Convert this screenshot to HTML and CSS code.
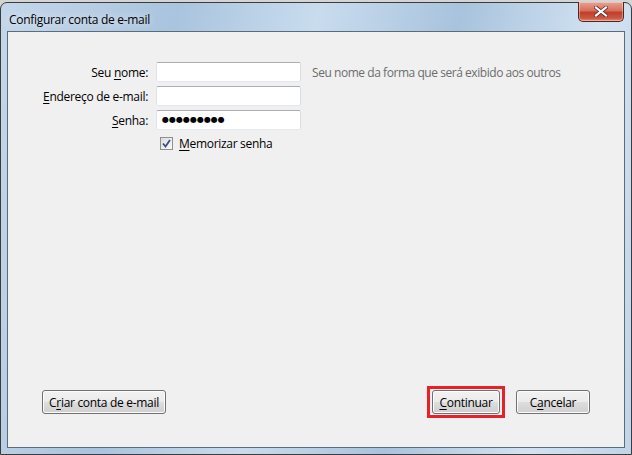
FILE: index.html
```html
<!DOCTYPE html>
<html lang="pt">
<head>
<meta charset="utf-8">
<link rel="stylesheet" href="styles.css">
</head>
<body>
<div class="window">
  <div class="titlebar">
    <span class="title">Configurar conta de e-mail</span>
    <button class="close" aria-label="Fechar">
      <svg width="14" height="11" viewBox="0 0 14 11"><path d="M2 1.5 L12 9.5 M12 1.5 L2 9.5" stroke="#5a2a22" stroke-width="3.6" stroke-linecap="square"/><path d="M2 1.5 L12 9.5 M12 1.5 L2 9.5" stroke="#fff" stroke-width="2.2" stroke-linecap="square"/></svg>
    </button>
  </div>
  <div class="client">
    <div class="form">
      <label class="lbl">Seu <u>n</u>ome:</label>
      <div class="field"><span class="input"></span><span class="hint">Seu nome da forma que será exibido aos outros</span></div>
      <label class="lbl"><u>E</u>ndereço de e-mail:</label>
      <div class="field"><span class="input"></span></div>
      <label class="lbl"><u>S</u>enha:</label>
      <div class="field"><span class="input pw">●●●●●●●●●</span></div>
      <span></span>
      <div class="check-row">
        <span class="checkbox">
          <svg width="9" height="9" viewBox="0 0 9 9"><path d="M1 4.5 L3.5 7.5 L8 1" fill="none" stroke="#3b4f86" stroke-width="1.8"/></svg>
        </span>
        <span class="check-label"><u>M</u>emorizar senha</span>
      </div>
    </div>
    <div class="buttons">
      <button class="btn btn-create">C<u>r</u>iar conta de e-mail</button>
      <span class="spacer"></span>
      <span class="focus-ring"><button class="btn btn-continue"><u>C</u>ontinuar</button></span>
      <button class="btn btn-cancel">C<u>a</u>ncelar</button>
    </div>
  </div>
</div>
</body>
</html>
```
FILE: styles.css
```css
* { box-sizing: border-box; }
html, body { margin: 0; padding: 0; }
body {
  width: 632px;
  height: 455px;
  background: #d4d4d4;
  font-family: "Open Sans", "Noto Sans", sans-serif;
  font-size: 12px;
  color: #000;
  overflow: hidden;
}
.window {
  margin-top: 2px;
  width: 632px;
  height: 453px;
  border: 1px solid #3c3c3c;
  border-radius: 7px 7px 0 0;
  background: linear-gradient(100deg, #c4d7ea 0%, #a9c4de 25%, #c9dcee 45%, #a8c3dd 65%, #d2e2f1 85%, #c0d5ea 100%);
  padding: 0 6px 6px 6px;
  display: flex;
  flex-direction: column;
}
.titlebar {
  height: 28px;
  display: flex;
  align-items: flex-start;
  position: relative;
}
.title {
  margin-top: 8px;
  margin-left: 2px;
  font-size: 12px;
  letter-spacing: -0.3px;
  color: #000;
  text-shadow: 0 0 8px rgba(255,255,255,0.9);
}
.close {
  margin-left: auto;
  margin-right: 1px;
  margin-top: -1px;
  width: 46px;
  height: 20px;
  border: 1px solid #5b2119;
  border-top: none;
  border-radius: 0 0 5px 5px;
  background: linear-gradient(#e8a293 0%, #d6705d 45%, #c0402b 55%, #c9573f 85%, #e0907c 100%);
  display: flex;
  align-items: center;
  justify-content: center;
  padding: 0;
  box-shadow: inset 0 0 0 1px rgba(255,255,255,0.35);
}
.client {
  flex: 1;
  border: 1px solid #5d6a78;
  background: #f0f0f0;
  display: flex;
  flex-direction: column;
  padding: 30px 34px 29px 34px;
}
.form {
  display: grid;
  grid-template-columns: 106px auto;
  column-gap: 8px;
  row-gap: 4px;
  align-items: center;
}
.lbl {
  text-align: right;
  font-size: 12px;
  letter-spacing: -0.3px;
  white-space: nowrap;
}
.field {
  display: flex;
  align-items: center;
  height: 20px;
}
.input {
  width: 145px;
  height: 20px;
  background: #fff;
  border: 1px solid #abadb3;
  border-left-color: #e2e3ea;
  border-right-color: #dbdfe6;
  border-bottom-color: #e3e9ef;
  border-radius: 2px;
  display: inline-block;
}
.pw {
  font-size: 8px;
  line-height: 18px;
  padding-left: 5px;
  letter-spacing: 0;
  font-family: "DejaVu Sans", sans-serif;
}
.hint {
  margin-left: 11px;
  color: #6d6d6d;
  letter-spacing: -0.45px;
  white-space: nowrap;
}
.check-row {
  display: flex;
  align-items: center;
  margin-top: 1px;
  margin-left: 4px;
}
.checkbox {
  width: 13px;
  height: 13px;
  border: 1px solid #8e8f8f;
  background: linear-gradient(135deg, #dcdcdc, #fafafa);
  display: flex;
  align-items: center;
  justify-content: center;
}
.check-label {
  margin-left: 6px;
  letter-spacing: -0.3px;
}
.buttons {
  margin-top: auto;
  display: flex;
  align-items: center;
}
.spacer { flex: 1; }
.btn {
  font-family: inherit;
  font-size: 12px;
  letter-spacing: -0.3px;
  height: 24px;
  padding: 0 6px;
  border: 1px solid #707070;
  border-radius: 3px;
  background: linear-gradient(#f2f2f2 0%, #ebebeb 48%, #dddddd 52%, #cfcfcf 100%);
  box-shadow: inset 0 0 0 1px #fcfcfc;
  color: #000;
}
.btn-create { width: 124px; }
.focus-ring {
  border: 3px solid #e8202a;
  padding: 1px 2px;
  display: inline-flex;
}
.btn-continue { width: 68px; }
.btn-cancel { width: 74px; margin-left: 11px; }
u { text-decoration: underline; text-underline-offset: 2px; }
```
